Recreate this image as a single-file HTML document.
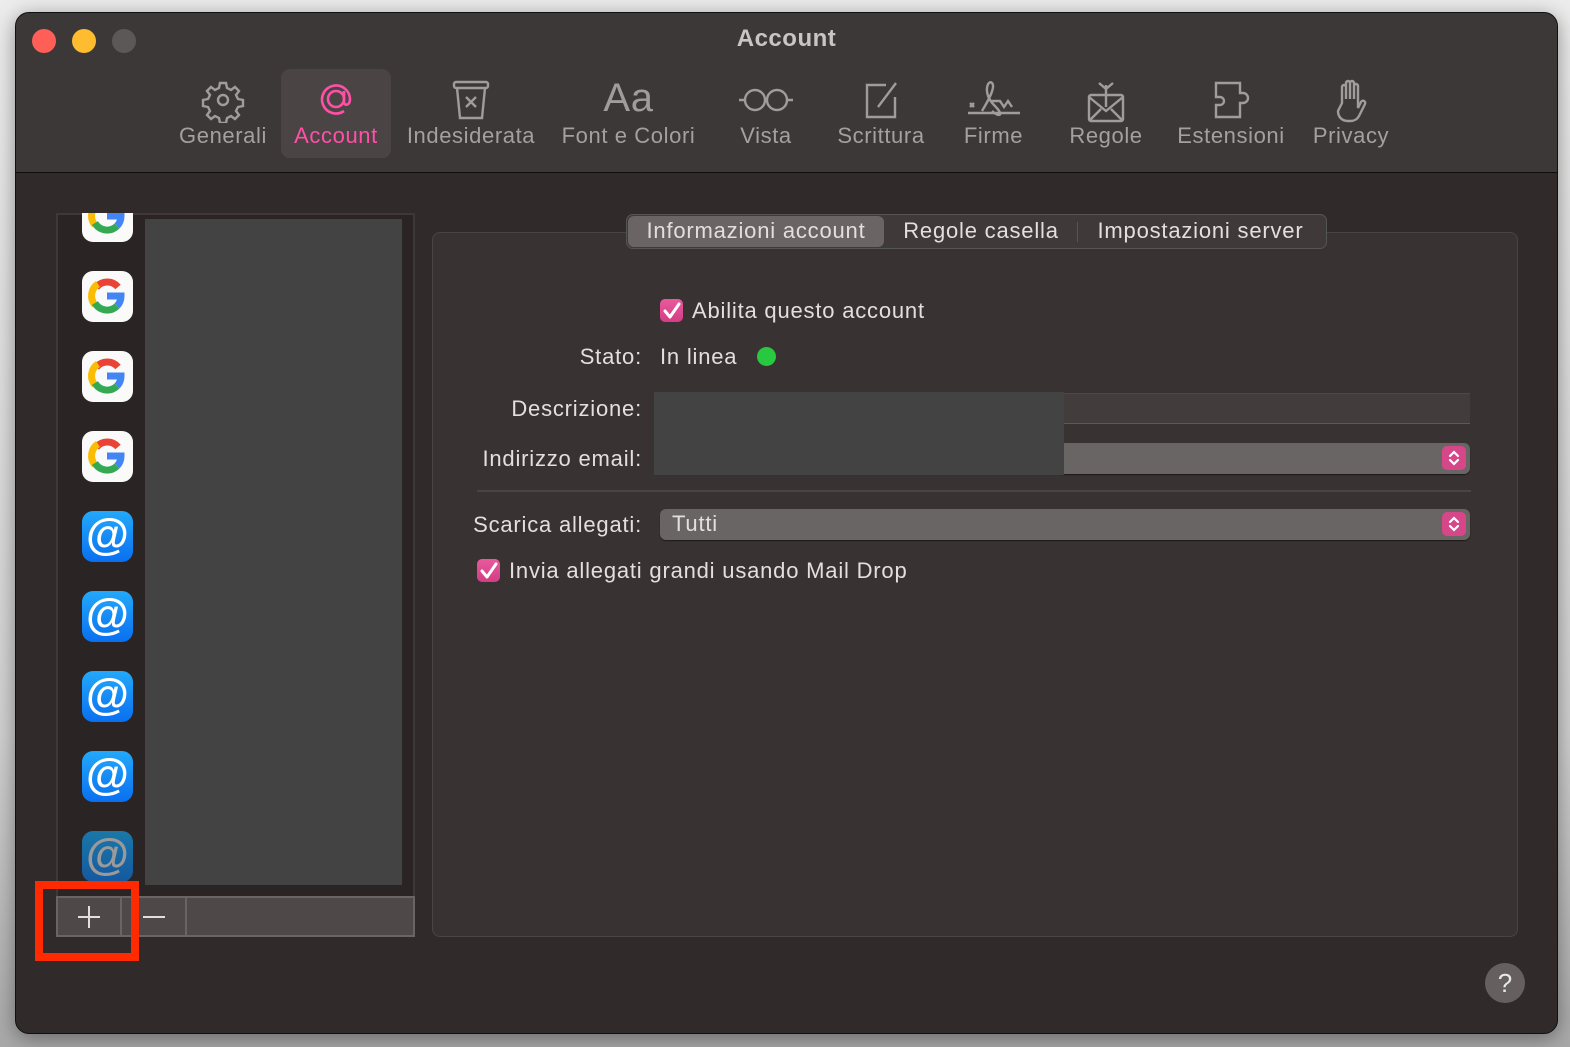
<!DOCTYPE html>
<html><head><meta charset="utf-8"><style>
*{box-sizing:border-box;margin:0;padding:0}
body{width:1570px;height:1047px;background:linear-gradient(#ececec,#d0d0d0 70%,#a8a8a8);font-family:"Liberation Sans",sans-serif;position:relative;overflow:hidden}
.win{position:absolute;left:15px;top:12px;width:1543px;height:1022px;border-radius:14px;background:#302b2a;border:1px solid #111;overflow:hidden;box-shadow:0 4px 20px rgba(0,0,0,.4)}
.tb{position:absolute;left:0;top:0;width:100%;height:160px;background:#3c3837;border-bottom:1px solid #0c0c0c}
.dot{position:absolute;top:16px;width:24px;height:24px;border-radius:50%}
.title{position:absolute;left:0;width:100%;top:12px;text-align:center;color:#c9c5c4;font-weight:bold;font-size:24px;letter-spacing:.5px}
.it{position:absolute;top:56px;height:90px;text-align:center;color:#a3a09f;font-size:22px;letter-spacing:.6px;white-space:nowrap}
.it svg{display:block;margin:8px auto 0;height:46px}
.abs{position:absolute}
.lbl{position:absolute;color:#e3dfde;font-size:22px;letter-spacing:.8px;white-space:nowrap}
.ic{position:absolute;left:66px;width:51px;height:51px;border-radius:11px}
.g{background:#fafafa}
.at{background:linear-gradient(#22a9fb,#0a6ff0);color:#fff;font-size:44px;text-align:center;line-height:48px;font-weight:bold}
.chk{position:absolute;width:23px;height:23px;border-radius:5px;background:linear-gradient(#e85a9d,#d33d84)}
.pop{position:absolute;background:#696564;border-radius:6px;box-shadow:0 1px 1px rgba(0,0,0,.5)}
.step{position:absolute;right:4px;top:3px;width:24px;height:24px;border-radius:5px;background:#d6478a}
</style></head><body>
<svg width="0" height="0" style="position:absolute"><defs>
<g id="G"><path d="M36 16A14 14 0 1 0 38 31" fill="none" stroke="#ea4335" stroke-width="7" stroke-dasharray="25 200"/><path d="M16 13A14 14 0 0 0 13 34" fill="none" stroke="#fbbc05" stroke-width="7"/><path d="M13 32A14 14 0 0 0 35 35" fill="none" stroke="#34a853" stroke-width="7"/><path d="M25 25h14c0 5-2 8-4 10" fill="none" stroke="#4285f4" stroke-width="7"/></g>
<g id="S"><path d="M8 10l4-4 4 4M8 14l4 4 4-4" fill="none" stroke="#fff" stroke-width="2.2" stroke-linecap="round"/></g>
<g id="C"><path d="M5 12l5 6 9-13" fill="none" stroke="#fff" stroke-width="3" stroke-linecap="round" stroke-linejoin="round"/></g>
</defs></svg>
<div class="win">
 <div class="tb">
  <div class="dot" style="left:16px;background:#ff5f57"></div>
  <div class="dot" style="left:56px;background:#febc2e"></div>
  <div class="dot" style="left:96px;background:#5c5857"></div>
  <div class="title">Account</div>
  <div class="abs" style="left:265px;top:56px;width:110px;height:89px;background:#4a4544;border-radius:9px"></div>
  <div class="it" style="left:157px;width:100px"><svg viewBox="0 0 46 46" fill="none" stroke="#9f9c9b" stroke-width="2.4"><circle cx="23" cy="23" r="5"/><path d="M20 6h6l1 5 4 2 4-3 4 4-3 4 2 4 5 1v6l-5 1-2 4 3 4-4 4-4-3-4 2-1 5h-6l-1-5-4-2-4 3-4-4 3-4-2-4-5-1v-6l5-1 2-4-3-4 4-4 4 3 4-2z"/></svg><span>Generali</span></div>
  <div class="it" style="left:265px;width:110px;color:#ff4fa6"><svg viewBox="0 0 46 46" fill="none" stroke="#ff4fa6" stroke-width="2.6"><circle cx="23" cy="22" r="8"/><path d="M31 14v11c0 4 6 4 6-3a14 14 0 1 0-6 12"/></svg><span>Account</span></div>
  <div class="it" style="left:385px;width:140px"><svg viewBox="0 0 46 46" fill="none" stroke="#9f9c9b" stroke-width="2.4"><rect x="6" y="5" width="34" height="6" rx="2"/><path d="M9 11l3 30h22l3-30M18 20l10 10M28 20l-10 10"/></svg><span>Indesiderata</span></div>
  <div class="it" style="left:540px;width:145px"><div style="font-size:40px;height:54px;line-height:58px;color:#9f9c9b">Aa</div><span>Font e Colori</span></div>
  <div class="it" style="left:710px;width:80px"><svg viewBox="0 0 60 46" fill="none" stroke="#9f9c9b" stroke-width="2.4"><circle cx="19" cy="23" r="10"/><circle cx="41" cy="23" r="10"/><path d="M29 23h2M3 23h6M51 23h6"/></svg><span>Vista</span></div>
  <div class="it" style="left:815px;width:100px"><svg viewBox="0 0 46 46" fill="none" stroke="#9f9c9b" stroke-width="2.4"><path d="M28 8H9v32h28V20"/><path d="M20 30l18-24"/></svg><span>Scrittura</span></div>
  <div class="it" style="left:935px;width:85px"><svg viewBox="0 0 60 46" fill="none" stroke="#9f9c9b" stroke-width="2.4"><path d="M4 36h52M6 26l4 4M10 26l-4 4M18 34c6-10 14-24 10-28s-10 10 2 22 4 12-2 6M26 24h10l4 6 4-6 4 6"/></svg><span>Firme</span></div>
  <div class="it" style="left:1050px;width:80px"><svg viewBox="0 0 46 46" fill="none" stroke="#9f9c9b" stroke-width="2.4"><rect x="6" y="18" width="34" height="26" rx="2"/><path d="M6 20l17 14 17-14M6 44l12-12M40 44l-12-12M23 30V8M23 12l-7-6M23 12l7-6"/></svg><span>Regole</span></div>
  <div class="it" style="left:1155px;width:120px"><svg viewBox="0 0 46 46" fill="none" stroke="#9f9c9b" stroke-width="2.4"><path d="M8 6h24v10h3a5 5 0 0 1 0 10h-3v14H8V28h4a4 4 0 0 0 0-8H8z"/></svg><span>Estensioni</span></div>
  <div class="it" style="left:1290px;width:90px"><svg viewBox="0 0 46 46" fill="none" stroke="#9f9c9b" stroke-width="2.4"><path d="M14 26V10a2 2 0 0 1 4 0v12V6a2 2 0 0 1 4 0v16V6a2 2 0 0 1 4 0v16V9a2 2 0 0 1 4 0v22l3-6a2 2 0 0 1 4 2l-6 12c-2 4-5 5-9 5h-2c-6 0-10-4-10-10z"/></svg><span>Privacy</span></div>
 </div>
 <div class="abs" style="left:40px;top:200px;width:359px;height:685px;background:#2a2424;border:2px solid #3e3938;overflow:hidden">
  <div class="abs" style="left:87px;top:4px;width:257px;height:666px;background:#434343"></div>
 </div>
 <div class="abs" style="left:40px;top:200px;width:90px;height:670px;overflow:hidden">
 <div class="abs" style="left:-40px;top:-200px;width:200px;height:900px">
  <div class="ic g" style="top:178px"><svg width="51" height="51" viewBox="0 0 51 51"><use href="#G"/></svg></div>
  <div class="ic g" style="top:258px"><svg width="51" height="51" viewBox="0 0 51 51"><use href="#G"/></svg></div>
  <div class="ic g" style="top:338px"><svg width="51" height="51" viewBox="0 0 51 51"><use href="#G"/></svg></div>
  <div class="ic g" style="top:418px"><svg width="51" height="51" viewBox="0 0 51 51"><use href="#G"/></svg></div>
  <div class="ic at" style="top:498px">@</div>
  <div class="ic at" style="top:578px">@</div>
  <div class="ic at" style="top:658px">@</div>
  <div class="ic at" style="top:738px">@</div>
  <div class="ic at" style="top:818px;background:linear-gradient(#1a78a8,#1558a0);color:#9a9a9a">@</div>
 </div></div>
 <div class="abs" style="left:40px;top:883px;width:359px;height:41px;background:#4e4948;border:2px solid #6a6564"></div>
 <div class="abs" style="left:104px;top:885px;width:2px;height:37px;background:#6a6564"></div>
 <div class="abs" style="left:169px;top:885px;width:2px;height:37px;background:#6a6564"></div>
 <div class="abs" style="left:62px;top:903px;width:22px;height:2px;background:#e0e0e0"></div>
 <div class="abs" style="left:72px;top:893px;width:2px;height:22px;background:#e0e0e0"></div>
 <div class="abs" style="left:127px;top:903px;width:22px;height:2px;background:#e0e0e0"></div>
 <div class="abs" style="left:19px;top:868px;width:104px;height:80px;border:8px solid #ff2a00"></div>
 <div class="abs" style="left:416px;top:219px;width:1086px;height:705px;background:#383332;border:1px solid #4a4544;border-radius:8px"></div>
 <div class="abs" style="left:610px;top:201px;width:701px;height:35px;background:#3f3a39;border:1px solid #555;border-radius:7px"></div>
 <div class="abs" style="left:612px;top:203px;width:256px;height:31px;background:#6a6564;border-radius:6px"></div>
 <div class="abs" style="left:1061px;top:209px;width:1px;height:20px;background:#555"></div>
 <div class="lbl" style="left:612px;top:205px;width:256px;text-align:center">Informazioni account</div>
 <div class="lbl" style="left:870px;top:205px;width:190px;text-align:center">Regole casella</div>
 <div class="lbl" style="left:1062px;top:205px;width:245px;text-align:center">Impostazioni server</div>
 <div class="chk" style="left:644px;top:286px"><svg width="23" height="23"><use href="#C"/></svg></div>
 <div class="lbl" style="left:676px;top:285px">Abilita questo account</div>
 <div class="lbl" style="left:380px;top:331px;width:246px;text-align:right">Stato:</div>
 <div class="lbl" style="left:644px;top:331px">In linea</div>
 <div class="abs" style="left:741px;top:334px;width:19px;height:19px;border-radius:50%;background:#28c840"></div>
 <div class="lbl" style="left:380px;top:383px;width:246px;text-align:right">Descrizione:</div>
 <div class="lbl" style="left:380px;top:433px;width:246px;text-align:right">Indirizzo email:</div>
 <div class="abs" style="left:1040px;top:380px;width:414px;height:31px;background:#423d3c;border-bottom:1px solid #5e5958;border-top:1px solid #4e4948"></div>
 <div class="pop" style="left:1040px;top:430px;width:414px;height:31px"><div class="step"><svg width="24" height="24"><use href="#S"/></svg></div></div>
 <div class="abs" style="left:638px;top:379px;width:410px;height:83px;background:#434343"></div>
 <div class="abs" style="left:461px;top:477px;width:994px;height:2px;background:#4a4544"></div>
 <div class="lbl" style="left:380px;top:499px;width:246px;text-align:right">Scarica allegati:</div>
 <div class="pop" style="left:644px;top:496px;width:810px;height:31px"><div class="lbl" style="left:12px;top:2px">Tutti</div><div class="step"><svg width="24" height="24"><use href="#S"/></svg></div></div>
 <div class="chk" style="left:461px;top:546px"><svg width="23" height="23"><use href="#C"/></svg></div>
 <div class="lbl" style="left:493px;top:545px">Invia allegati grandi usando Mail Drop</div>
 <div class="abs" style="left:1469px;top:950px;width:40px;height:40px;border-radius:50%;background:#65605f;color:#e8e8e8;font-size:26px;text-align:center;line-height:40px">?</div>
</div>
</body></html>
